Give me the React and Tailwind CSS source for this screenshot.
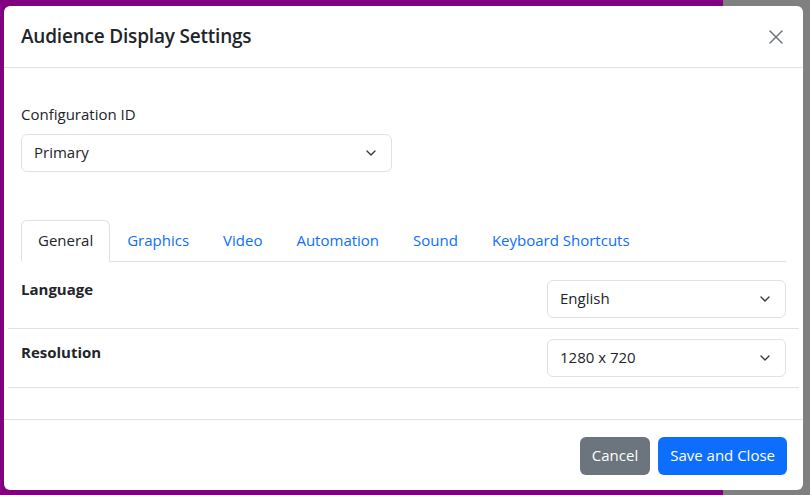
import React from 'react';
import { ChevronDown, X } from 'lucide-react';

const font = { fontFamily: '"Open Sans", "Noto Sans", sans-serif' };

function Select({ value, className }) {
  return (
    <div className={`flex items-center justify-between h-[38px] px-3 border border-[#dee2e6] rounded-md bg-white text-[15px] text-[#212529] ${className}`}>
      <span>{value}</span>
      <ChevronDown size={16} strokeWidth={2} className="text-[#343a40]" />
    </div>
  );
}

export default function App() {
  const tabs = ['Graphics', 'Video', 'Automation', 'Sound', 'Keyboard Shortcuts'];
  return (
    <div className="relative w-[810px] h-[495px] overflow-hidden flex" style={font}>
      <div className="w-[723px] h-full bg-[#800080]" />
      <div className="flex-1 h-full bg-[#808080]" />
      <div className="absolute left-[4px] top-[6px] w-[799px] h-[484px] bg-white rounded-md flex flex-col">
        <div className="h-[62px] flex items-center justify-between px-[17px] border-b border-[#dee2e6]">
          <h1 className="text-[19px] font-semibold text-[#212529] tracking-[-0.2px]">Audience Display Settings</h1>
          <X size={24} strokeWidth={1.5} className="text-[#6c757d] mr-[-2px]" />
        </div>
        <div className="flex-1 px-[17px] pt-[35px]">
          <div className="text-[15px] text-[#212529] mb-[8px]">Configuration ID</div>
          <Select value="Primary" className="w-[371px]" />
          <div className="mt-[48px] flex border-b border-[#dee2e6] h-[42px] text-[15px]">
            <div className="px-4 flex items-center border border-[#dee2e6] border-b-white rounded-t-md -mb-px bg-white text-[#212529]">General</div>
            {tabs.map(t => (
              <div key={t} className="px-[17px] flex items-center text-[#0d6efd]">{t}</div>
            ))}
          </div>
          <div className="flex justify-between border-b border-[#dee2e6] pt-[34px] pb-[10px] -mx-[13px] px-[13px] mt-[-16px]">
            <span className="text-[15px] font-bold text-[#212529] mt-[-2px]">Language</span>
            <Select value="English" className="w-[239px]" />
          </div>
          <div className="flex justify-between border-b border-[#dee2e6] pt-[10px] pb-[10px] -mx-[13px] px-[13px]">
            <span className="text-[15px] font-bold text-[#212529] mt-[2px]">Resolution</span>
            <Select value="1280 x 720" className="w-[239px]" />
          </div>
        </div>
        <div className="h-[71px] border-t border-[#dee2e6] flex items-center justify-end gap-[8px] px-[16px] pt-[1px]">
          <button className="h-[38px] px-[12px] rounded-md bg-[#6c757d] text-white text-[15px]">Cancel</button>
          <button className="h-[38px] px-[12px] rounded-md bg-[#0d6efd] text-white text-[15px]">Save and Close</button>
        </div>
      </div>
    </div>
  );
}
